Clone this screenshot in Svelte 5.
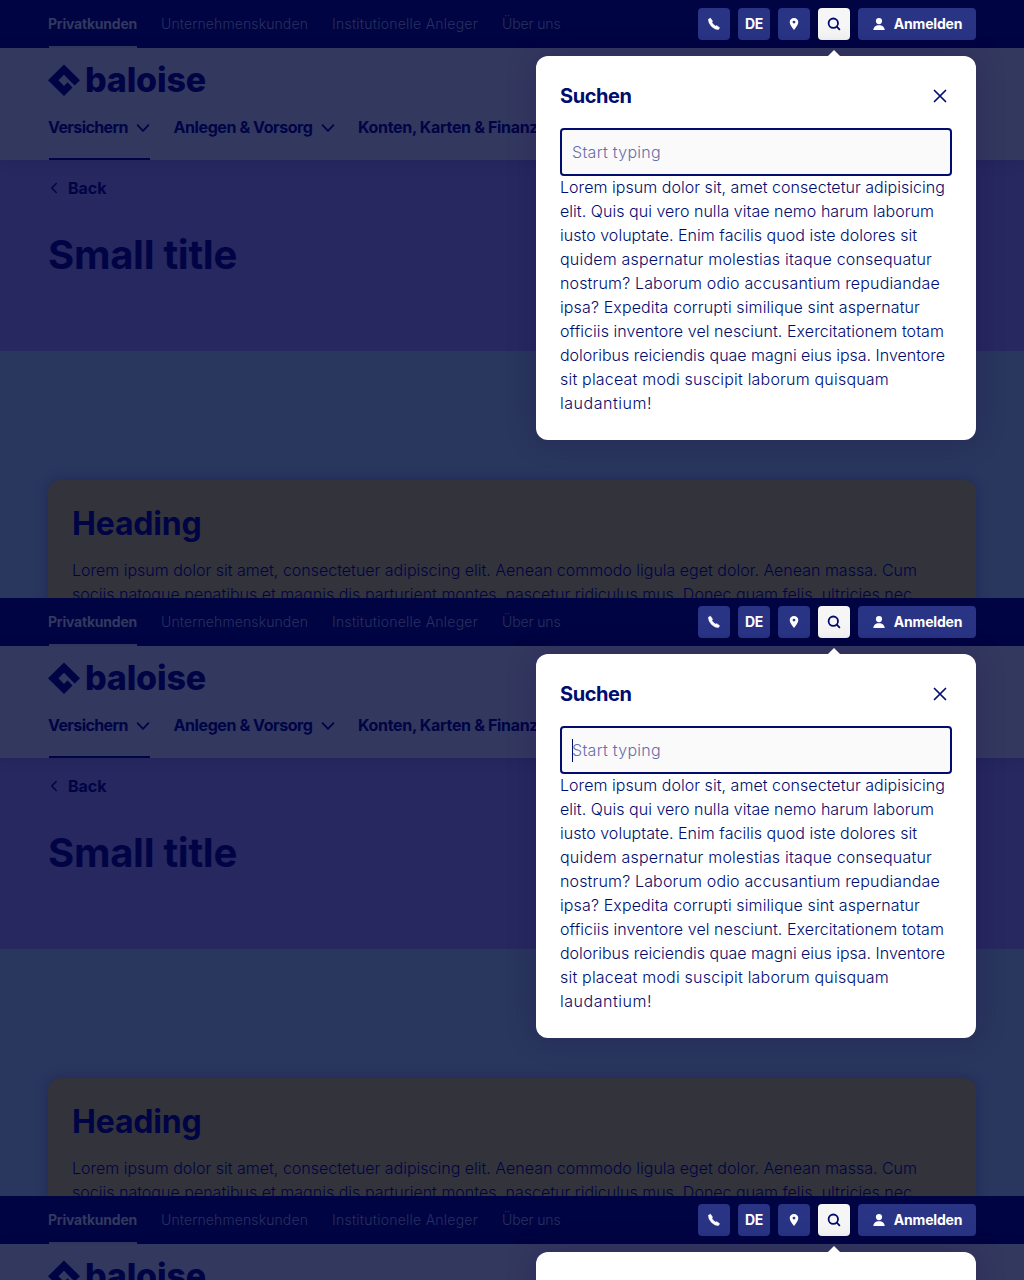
<script>
  const frames = [{ caret: false }, { caret: true }, { caret: false }];
  const meta = [
    { label: 'Privatkunden', width: 89, active: true },
    { label: 'Unternehmenskunden', width: 147 },
    { label: 'Institutionelle Anleger', width: 146 },
    { label: 'Über uns', width: 58.5 }
  ];
  const nav = [
    { label: 'Versichern', width: 80, active: true },
    { label: 'Anlegen & Vorsorg', width: 139 },
    { label: 'Konten, Karten & Finanzieren', width: 218 }
  ];
  const panelLines = [
    ['Lorem ipsum dolor sit, amet consectetur adipisicing', 385],
    ['elit. Quis qui vero nulla vitae nemo harum laborum', 374],
    ['iusto voluptate. Enim facilis quod iste dolores sit', 357],
    ['quidem aspernatur molestias itaque consequatur', 372],
    ['nostrum? Laborum odio accusantium repudiandae', 380],
    ['ipsa? Expedita corrupti similique sint aspernatur', 360],
    ['officiis inventore vel nesciunt. Exercitationem totam', 384],
    ['doloribus reiciendis quae magni eius ipsa. Inventore', 385],
    ['sit placeat modi suscipit laborum quisquam', 329],
    ['laudantium!', 92]
  ];
  const cardLines = [
    ['Lorem ipsum dolor sit amet, consectetuer adipiscing elit. Aenean commodo ligula eget dolor. Aenean massa. Cum', 845],
    ['sociis natoque penatibus et magnis dis parturient montes, nascetur ridiculus mus. Donec quam felis, ultricies nec', 840]
  ];

  // Tracks a single line of text so that it sets to the given measure.
  function fit(node, width) {
    const natural = node.getBoundingClientRect().width;
    node.style.letterSpacing = `${(width - natural) / node.textContent.length}px`;
  }
</script>

<div class="page">
  {#each frames as frame}
    <section class="frame">
      <div class="topbar">
        <nav class="meta">
          {#each meta as item}
            <a class:active={item.active}><span class="t" use:fit={item.width}>{item.label}</span></a>
          {/each}
        </nav>
        <div class="actions">
          <button aria-label="Telefon">
            <svg width="14" height="14" viewBox="0 0 14 14"><path fill="#fff" stroke="#fff" stroke-width=".6" stroke-linejoin="round" d="M1.400 2.300L3.500 1.200L5.500 4.200L4.900 5.500Q6.100 7.700 8.400 9.100L9.800 8.700L12.600 10.700L11.400 12.500Q7.900 12.700 4.600 9.500Q1.400 6.200 1.400 2.300Z" /></svg>
          </button>
          <button><span class="t" use:fit={18}>DE</span></button>
          <button aria-label="Standort">
            <svg width="14" height="14" viewBox="0 0 14 14"><path fill="#fff" fill-rule="evenodd" d="M7 1C4.500 1 2.700 2.800 2.700 5.100C2.700 8 5 10.500 7 13C9 10.500 11.300 8 11.300 5.100C11.300 2.800 9.500 1 7 1ZM7 3.700A1.400 1.400 0 1 1 7 6.500A1.400 1.400 0 1 1 7 3.700Z" /></svg>
          </button>
          <button class="on" aria-label="Suchen">
            <svg width="14" height="14" viewBox="0 0 14 14" fill="none" stroke="#000d6e" stroke-width="1.8" stroke-linecap="round"><circle cx="6.300" cy="6.200" r="4.700" /><path d="M9.800 9.700L12.400 12.300" /></svg>
          </button>
          <button class="login">
            <svg width="14" height="14" viewBox="0 0 14 14" fill="#fff"><circle cx="7" cy="4.100" r="3.100" /><path d="M1.300 13C1.300 10.300 3.400 8.400 5.700 8.200H8.300C10.600 8.400 12.700 10.300 12.700 13Z" /></svg>
            <span class="t" use:fit={68.5}>Anmelden</span>
          </button>
        </div>
      </div>

      <header>
        <div class="logo">
          <svg width="32" height="32" viewBox="0 0 32 32"><path fill="#000445" d="M16 .4L32 16.300L26.600 21.500L16 10.800L10.400 16.300L16 21.900L19.200 18.800V17.900L24.500 23.600L16 32L0 16.200Z" /></svg>
          <span class="t" use:fit={121}>baloise</span>
        </div>
        <nav class="main">
          {#each nav as item}
            <a class:active={item.active}>
              <span class="t" use:fit={item.width}>{item.label}</span>
              <svg width="14" height="10" viewBox="0 0 14 10" fill="none" stroke="#000445" stroke-width="1.800" stroke-linecap="round" stroke-linejoin="round"><path d="M1.600 2.200L7 7.900L12.400 2.200" /></svg>
            </a>
          {/each}
        </nav>
      </header>

      <div class="hero">
        <a class="back">
          <svg width="12" height="14" viewBox="0 0 12 14" fill="none" stroke="#000445" stroke-width="1.500" stroke-linecap="round" stroke-linejoin="round"><path d="M8.200 2.500L3.800 7L8.200 11.500" /></svg>
          <span class="t" use:fit={38.5}>Back</span>
        </a>
        <h1><span class="t" use:fit={189}>Small title</span></h1>
      </div>

      <main>
        <article>
          <h2><span class="t" use:fit={129.5}>Heading</span></h2>
          {#each cardLines as [text, width]}
            <p><span class="t" use:fit={width}>{text}</span></p>
          {/each}
        </article>
      </main>

      <aside>
        <div class="panel-head">
          <h3><span class="t" use:fit={71.5}>Suchen</span></h3>
          <svg width="24" height="24" viewBox="0 0 24 24" fill="none" stroke="#000d6e" stroke-width="1.700" stroke-linecap="round"><path d="M6.500 6.500L17.500 17.500M17.500 6.500L6.500 17.500" /></svg>
        </div>
        <div class="field" class:caret={frame.caret}><span class="t" use:fit={89}>Start typing</span></div>
        {#each panelLines as [text, width]}
          <p><span class="t" use:fit={width}>{text}</span></p>
        {/each}
      </aside>
    </section>
  {/each}
</div>

<style>
  .page {
    width: 1024px;
    height: 1280px;
    overflow: hidden;
    font: 350 16px/24px Inter, 'Open Sans', sans-serif;
    color: #000445;
  }
  .frame {
    position: relative;
    height: 598px;
    overflow: hidden;
    display: flex;
    flex-direction: column;
    background: #29365d;
  }
  .t { display: inline-block; white-space: nowrap; }
  h1, h2, h3, p { margin: 0; }
  p { height: 24px; line-height: 23px; }
  svg { display: block; flex: none; }
  .topbar {
    flex: none;
    height: 48px;
    padding: 0 48px;
    display: flex;
    justify-content: space-between;
    background: #000442;
  }
  .meta { display: flex; gap: 24px; font-size: 14px; color: #293060; }
  .meta a { line-height: 48px; height: 48px; }
  .meta .active {
    color: #33385f;
    font-weight: 700;
    background: linear-gradient(#33385f, #33385f) 1px 100% / 100% 2px no-repeat;
  }
  .actions { display: flex; gap: 8px; padding-top: 8px; }
  button {
    width: 32px;
    height: 32px;
    padding: 0;
    border: 0;
    border-radius: 4px;
    display: flex;
    align-items: center;
    justify-content: center;
    background: #293485;
    color: #fff;
    font: 700 14px/32px Inter, sans-serif;
  }
  .on { background: #f6f6f6; }
  .login { width: 118px; gap: 8px; }
  header {
    flex: none;
    height: 112px;
    padding: 16px 48px 0;
    box-sizing: border-box;
    background: #33385f;
    position: relative;
    box-shadow: 0 2px 14px rgba(0, 4, 69, .12);
    display: flex;
    flex-direction: column;
    justify-content: space-between;
  }
  .logo {
    display: flex;
    gap: 5px;
    height: 32px;
    font: 800 34px/32px Inter, sans-serif;
  }
  .main { display: flex; gap: 23.5px; font-weight: 700; }
  .main a {
    display: flex;
    gap: 8px;
    height: 44px;
    line-height: 23px;
    white-space: nowrap;
  }
  .main svg { margin-top: 7px; }
  .main .active { background: linear-gradient(#000445, #000445) 1px 100% / 102px 2px no-repeat; }
  .hero {
    flex: none;
    height: 191px;
    box-sizing: border-box;
    padding: 16px 48px 0;
    background: #26285f;
  }
  .back { display: flex; align-items: center; gap: 8px; font-weight: 700; line-height: 22px; height: 23px; }
  h1 { margin-top: 32px; font: 700 40px/48px Inter, sans-serif; }
  main { padding: 129px 48px 0; }
  article {
    height: 200px;
    padding: 25px 24px 24px;
    box-sizing: border-box;
    border-radius: 12px;
    background: #33333c;
    box-shadow: 0 0 14px rgba(0, 7, 85, .22);
  }
  h2 { font: 700 32px/38px Inter, sans-serif; margin-bottom: 16px; }
  aside {
    position: absolute;
    top: 56px;
    right: 48px;
    width: 440px;
    height: 384px;
    padding: 24px;
    box-sizing: border-box;
    border-radius: 12px;
    background: #fff;
    color: #000d6e;
    box-shadow: 0 0 30px rgba(30, 8, 75, .24);
  }
  aside::before {
    content: '';
    position: absolute;
    top: -6px;
    left: 292px;
    border: 6px solid transparent;
    border-top: 0;
    border-bottom-color: #fff;
  }
  .panel-head { display: flex; justify-content: space-between; align-items: center; height: 32px; }
  h3 { font: 700 20px/32px Inter, sans-serif; }
  .field {
    position: relative;
    height: 48px;
    margin-top: 16px;
    box-sizing: border-box;
    border: 2px solid #000d6e;
    border-radius: 4px;
    padding: 0 10px;
    line-height: 45px;
    background: #fafafa;
    color: #666eaa;
  }
  .caret::before {
    content: '';
    position: absolute;
    left: 10px;
    top: 11px;
    width: 1px;
    height: 23px;
    background: #000d6e;
  }
</style>
